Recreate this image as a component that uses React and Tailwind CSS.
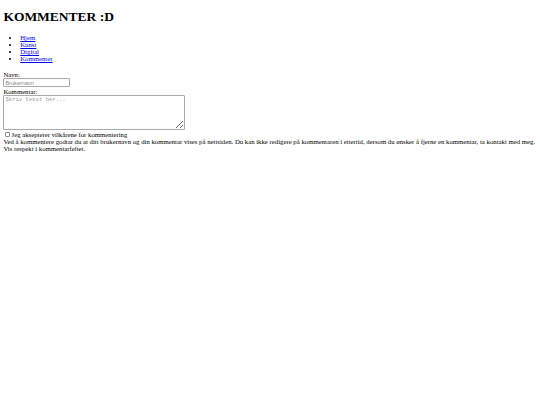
import React from "react";

const links = ["Hjem", "Kunst", "Digital", "Kommenter"];

export default function App() {
  return (
    <div className="min-h-[405px] bg-white px-[3.375px] pb-[3.375px] pt-px text-[6.75px] leading-[normal] text-black font-['Liberation_Serif','Times_New_Roman',serif]">
      <h1 className="mt-[8px] mb-[9px] text-[13.5px] leading-[normal] font-bold">KOMMENTER :D</h1>
      <ul className="mt-[6.75px] mb-[9px] pl-[16.875px] list-disc">
        {links.map(l => (
          <li key={l}>
            <a href="#" className="text-[#0000ee] underline">{l}</a>
          </li>
        ))}
      </ul>
      <form onSubmit={e => e.preventDefault()}>
        <label htmlFor="navn" className="block">Navn:</label>
        <input
          id="navn"
          type="text"
          placeholder="Brukernavn"
          className="block w-[66.5px] h-[9px] px-[1px] border border-[#a9a9a9] rounded-[1px] text-[5.6px] leading-[normal] font-['Liberation_Sans',Arial,sans-serif] placeholder-[#8a8a8a] outline-none"
        />
        <label htmlFor="kommentar" className="block mt-[0.5px]">Kommentar:</label>
        <textarea
          id="kommentar"
          placeholder="Skriv tekst her..."
          className="block w-[181.5px] h-[34.5px] mt-[0.5px] px-[1px] py-[0.5px] border border-[#a9a9a9] rounded-[1px] text-[5.6px] leading-[6.4px] font-['Liberation_Mono','Courier_New',monospace] placeholder-[#9a9a9a] outline-none"
        />
        <div className="mt-[1px] flex items-center">
          <input
            id="vilkar"
            type="checkbox"
            className="appearance-none w-[5.2px] h-[5.2px] ml-[1.7px] mr-[1.3px] my-[1.3px] border border-[#8a8a8a] rounded-[1px] bg-white"
          />
          <label htmlFor="vilkar">Jeg aksepterer vilkårene for kommentering</label>
        </div>
        <p>
          Ved å kommentere godtar du at ditt brukernavn og din kommentar vises på nettsiden. Du kan ikke redigere på kommentaren i ettertid, dersom du ønsker å fjerne en kommentar, ta kontakt med meg.
        </p>
        <p>Vis respekt i kommentarfeltet.</p>
      </form>
    </div>
  );
}
